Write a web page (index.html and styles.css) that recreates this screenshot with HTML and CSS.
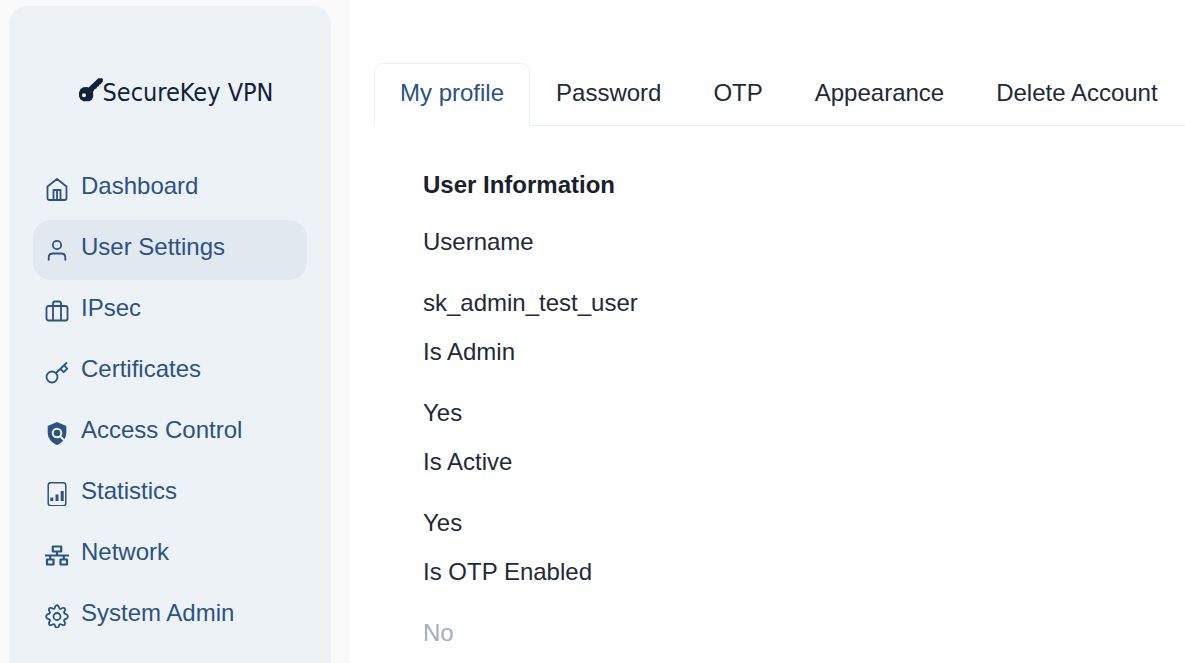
FILE: index.html
```html
<!DOCTYPE html>
<html lang="en">
<head>
<meta charset="utf-8">
<title>SecureKey VPN – User Settings</title>
<link rel="stylesheet" href="styles.css">
</head>
<body>
<div class="layout">
  <aside class="sidebar">
    <div class="sidebar-card">
      <a class="brand" href="#">
        <svg class="brand-icon" viewBox="0 0 24 24" aria-hidden="true">
          <path fill="currentColor" fill-rule="evenodd" d="M19.5.3h3.300q1.200.2 1.100 1.200v2.100l-1.500 1.100-.3 1.500-1.700.4-.5 1.700-1.700.5-.8 1.700-1.800.8-.9 1.700-.8.9.3 1.800v3.100l-1.300 2.700-2.500 1.700H4.500L1.500 21.400 0 18.500v-4l1.500-3.500 2.800-1.700 3.700-.3 1.500.4zM5 15.200a2 2 0 1 0 0 4 2 2 0 1 0 0-4z"/>
        </svg>
        <span>SecureKey VPN</span>
      </a>
      <nav class="menu" aria-label="Main">
        <a class="menu-item" href="#">
          <svg class="icon" viewBox="0 0 24 24" aria-hidden="true"><path d="M2.500 9.500 12 2l9.500 7.500V21q0 2-2 2h-15q-2 0-2-2zM8.500 23V13h7v10M12 14v9"/></svg>
          <span>Dashboard</span>
        </a>
        <a class="menu-item active" href="#" aria-current="page">
          <svg class="icon" viewBox="0 0 24 24" aria-hidden="true"><circle cx="12" cy="7" r="4.200"/><path d="M3.700 22.500V19.500q0-4 4-4h8.600q4 0 4 4v3"/></svg>
          <span>User Settings</span>
        </a>
        <a class="menu-item" href="#">
          <svg class="icon" viewBox="0 0 24 24" aria-hidden="true"><rect x="1.500" y="7" width="21" height="14.500" rx="2"/><path d="M8 21.500V4.500q0-2 2-2h4q2 0 2 2v17"/></svg>
          <span>IPsec</span>
        </a>
        <a class="menu-item" href="#">
          <svg class="icon" viewBox="0 0 24 24" aria-hidden="true"><circle cx="7" cy="17" r="5.500"/><path d="M11 13 22 2.500M15.500 9l3.200 3.200 3.600-3.600-3.200-3.200"/></svg>
          <span>Certificates</span>
        </a>
        <a class="menu-item" href="#">
          <svg class="icon" viewBox="0 0 24 24" aria-hidden="true"><path class="solid" d="m12 1 9.300 4v6.500c0 5.500-3.500 10-9.300 12.500-5.800-2.500-9.300-7-9.300-12.500V5z"/><circle class="cutout" cx="12" cy="12" r="4.300"/><path class="cutout" d="m15.200 15.200 5 5"/></svg>
          <span>Access Control</span>
        </a>
        <a class="menu-item" href="#">
          <svg class="icon" viewBox="0 0 24 24" aria-hidden="true"><rect class="thin" x="3.200" y="0.700" width="17.600" height="23" rx="2.500"/><path class="bars" d="M6.800 19v-3.500M12 19v-6.500M17.200 19V9"/></svg>
          <span>Statistics</span>
        </a>
        <a class="menu-item" href="#">
          <svg class="icon" viewBox="0 0 24 24" aria-hidden="true"><path class="heavy" d="M7.800 3.500h8.400v5H7.800zM2 16.500h6.500v5H2zM15.500 16.500H22v5h-6.500zM0 12.500h24M12 8.500v4M5.200 12.500v4M18.800 12.500v4"/></svg>
          <span>Network</span>
        </a>
        <a class="menu-item" href="#">
          <svg class="icon" viewBox="0 0 24 24" aria-hidden="true"><circle cx="12" cy="12.500" r="3.500"/><path d="M10.300 2.500q1.700-2.800 3.400 0l.6 1.600q.5 1 1.600.6l1.500-.7q3.200-.8 2.500 2.500l-.7 1.500q-.4 1.100.6 1.600l1.700.7q2.800 2.200 0 4.400l-1.700.7q-1 .5-.6 1.600l.7 1.500q.7 3.300-2.500 2.500l-1.500-.7q-1.100-.4-1.600.6l-.6 1.600q-1.700 2.800-3.400 0l-.6-1.600q-.5-1-1.600-.6l-1.500.7q-3.200.8-2.500-2.500l.7-1.500q.4-1.100-.6-1.600l-1.700-.7q-2.800-2.200 0-4.400l1.700-.7q1-.5.6-1.600l-.7-1.500Q3.400 3.200 6.600 4l1.500.7q1.100.4 1.600-.6z"/></svg>
          <span>System Admin</span>
        </a>
      </nav>
    </div>
  </aside>
  <main class="content">
    <div class="tabs" role="tablist">
      <button class="tab selected" type="button" role="tab" id="tab-profile" aria-selected="true" aria-controls="profile">My profile</button>
      <button class="tab" type="button" role="tab" aria-selected="false">Password</button>
      <button class="tab" type="button" role="tab" aria-selected="false">OTP</button>
      <button class="tab" type="button" role="tab" aria-selected="false">Appearance</button>
      <button class="tab" type="button" role="tab" aria-selected="false">Delete Account</button>
    </div>
    <section class="panel" id="profile" role="tabpanel" aria-labelledby="tab-profile">
      <h1 class="panel-title">User Information</h1>
      <dl class="details">
        <dt>Username</dt>
        <dd>sk_admin_test_user</dd>
        <dt>Is Admin</dt>
        <dd>Yes</dd>
        <dt>Is Active</dt>
        <dd>Yes</dd>
        <dt>Is OTP Enabled</dt>
        <dd class="muted">No</dd>
      </dl>
    </section>
  </main>
</div>
</body>
</html>
```
FILE: styles.css
```css
* {
  box-sizing: border-box;
}

body {
  margin: 0;
  overflow: hidden;
  background: #fff;
  color: #232936;
  font: 24px/36px "Liberation Sans", Arial, sans-serif;
}

.layout {
  display: flex;
  height: 100vh;
}

.sidebar {
  flex: none;
  display: flex;
  padding: 6px 19px 0 9px;
  background: #fafafa;
}

.sidebar-card {
  width: 322px;
  padding: 69px 24px 0;
  border-radius: 18px 18px 0 0;
  background: #edf2f7;
}

.brand {
  display: flex;
  justify-content: center;
  margin-bottom: 48px;
  padding-left: 12px;
  color: #0f2238;
  font-family: "DejaVu Sans Condensed", "DejaVu Sans", sans-serif;
  font-size: 25px;
  text-decoration: none;
  white-space: nowrap;
}

.brand-icon {
  width: 24px;
  height: 24px;
  margin-top: 3px;
}

.menu {
  display: grid;
  gap: 1px;
}

.menu-item {
  display: flex;
  gap: 12px;
  height: 60px;
  padding: 9px 12px 0;
  border-radius: 18px;
  color: #2c5282;
  text-decoration: none;
  white-space: nowrap;
}

.menu-item.active {
  background: #e2e8f0;
}

.icon {
  flex: none;
  width: 24px;
  height: 24px;
  margin-top: 9px;
  fill: none;
  stroke: currentColor;
  stroke-width: 1.8;
  stroke-linejoin: round;
}

.icon .solid {
  fill: currentColor;
  stroke: none;
}

.icon .cutout {
  stroke: #edf2f7;
  stroke-width: 2;
}

.icon .thin {
  stroke-width: 1.5;
}

.icon .heavy {
  stroke-width: 2.2;
}

.icon .bars {
  stroke-width: 3;
}

.content {
  flex: 1;
  min-width: 0;
  padding: 63px 0 0 24px;
}

.tabs {
  display: flex;
  border-bottom: 1px solid #e8eef6;
}

.tab {
  flex: none;
  margin-bottom: -1px;
  padding: 11px 25px 15px;
  border: 1px solid transparent;
  border-bottom: 0;
  border-radius: 9px 9px 0 0;
  background: none;
  color: inherit;
  font: inherit;
}

.tab.selected {
  border-color: #e8eef6;
  background: #fff;
  color: #2c5282;
}

.panel {
  padding: 41px 49px 0;
}

.panel-title {
  margin: 0 0 21px;
  color: #1a202c;
  font-size: 24px;
}

.details {
  margin: 0;
}

.details dd {
  margin: 0;
  padding: 25px 0 13px;
}

.details .muted {
  color: #a0aec0;
}
```
